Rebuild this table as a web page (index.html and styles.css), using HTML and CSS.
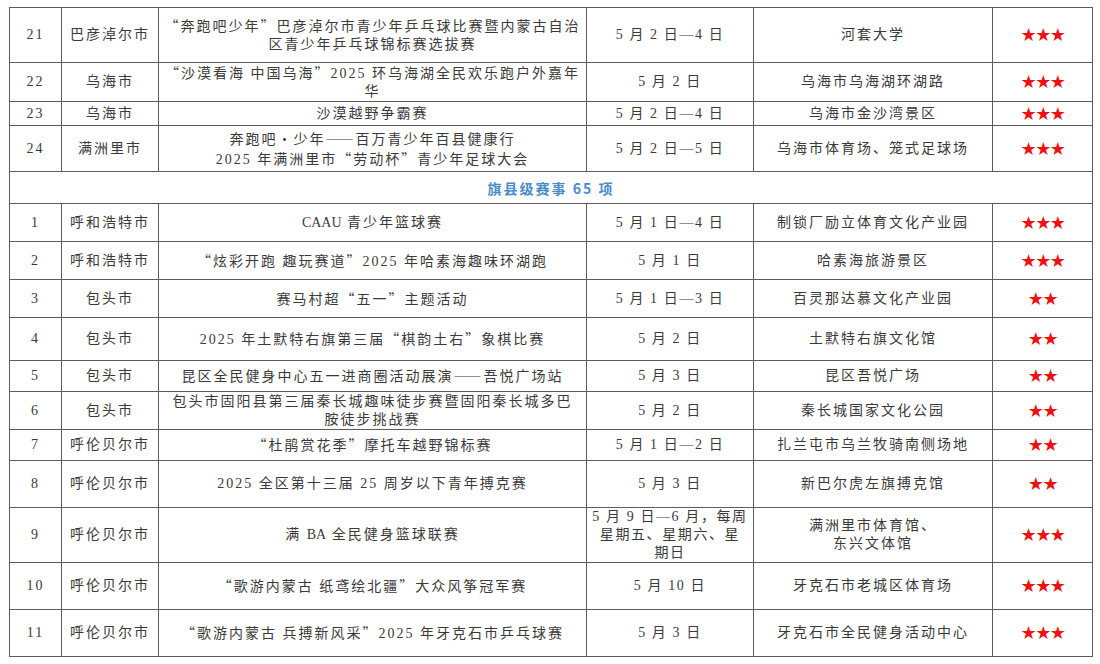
FILE: index.html
```html
<!DOCTYPE html>
<html lang="zh-CN">
<head>
<meta charset="utf-8">
<title>赛事列表</title>
<link rel="stylesheet" href="styles.css">
</head>
<body>
<div class="page">
<table class="events">
  <colgroup>
    <col class="c-no"><col class="c-city"><col class="c-name"><col class="c-date"><col class="c-place"><col class="c-star">
  </colgroup>
  <tbody>
    <tr class="h55"><td>21</td><td>巴彦淖尔市</td><td><span class="q">“</span>奔跑吧少年<span class="q">”</span>巴彦淖尔市青少年乒乓球比赛暨内蒙古自治<br>区青少年乒乓球锦标赛选拔赛</td><td class="date">5 月 2 日—4 日</td><td>河套大学</td><td class="stars">★★★</td></tr>
    <tr class="h39"><td>22</td><td>乌海市</td><td><span class="q">“</span>沙漠看海 中国乌海<span class="q">”</span>2025 环乌海湖全民欢乐跑户外嘉年<br>华</td><td class="date">5 月 2 日</td><td>乌海市乌海湖环湖路</td><td class="stars">★★★</td></tr>
    <tr class="h24"><td>23</td><td>乌海市</td><td>沙漠越野争霸赛</td><td class="date">5 月 2 日—4 日</td><td>乌海市金沙湾景区</td><td class="stars">★★★</td></tr>
    <tr class="h46"><td>24</td><td>满洲里市</td><td>奔跑吧<span class="q">•</span>少年<span class="q">——</span>百万青少年百县健康行<br>2025 年满洲里市<span class="q">“</span>劳动杯<span class="q">”</span>青少年足球大会</td><td class="date">5 月 2 日—5 日</td><td>乌海市体育场、笼式足球场</td><td class="stars">★★★</td></tr>
    <tr class="h32"><td colspan="6" class="section">旗县级赛事 65 项</td></tr>
    <tr class="h38"><td>1</td><td>呼和浩特市</td><td><span class="latin">CAAU</span> 青少年篮球赛</td><td class="date">5 月 1 日—4 日</td><td>制锁厂励立体育文化产业园</td><td class="stars">★★★</td></tr>
    <tr class="h38"><td>2</td><td>呼和浩特市</td><td><span class="q">“</span>炫彩开跑 趣玩赛道<span class="q">”</span>2025 年哈素海趣味环湖跑</td><td class="date">5 月 1 日</td><td>哈素海旅游景区</td><td class="stars">★★★</td></tr>
    <tr class="h38"><td>3</td><td>包头市</td><td>赛马村超<span class="q">“</span>五一<span class="q">”</span>主题活动</td><td class="date">5 月 1 日—3 日</td><td>百灵那达慕文化产业园</td><td class="stars">★★</td></tr>
    <tr class="h43"><td>4</td><td>包头市</td><td>2025 年土默特右旗第三届<span class="q">“</span>棋韵土右<span class="q">”</span>象棋比赛</td><td class="date">5 月 2 日</td><td>土默特右旗文化馆</td><td class="stars">★★</td></tr>
    <tr class="h31"><td>5</td><td>包头市</td><td>昆区全民健身中心五一进商圈活动展演<span class="q">——</span>吾悦广场站</td><td class="date">5 月 3 日</td><td>昆区吾悦广场</td><td class="stars">★★</td></tr>
    <tr class="h38"><td>6</td><td>包头市</td><td>包头市固阳县第三届秦长城趣味徒步赛暨固阳秦长城多巴<br>胺徒步挑战赛</td><td class="date">5 月 2 日</td><td>秦长城国家文化公园</td><td class="stars">★★</td></tr>
    <tr class="h31"><td>7</td><td>呼伦贝尔市</td><td><span class="q">“</span>杜鹃赏花季<span class="q">”</span>摩托车越野锦标赛</td><td class="date">5 月 1 日—2 日</td><td>扎兰屯市乌兰牧骑南侧场地</td><td class="stars">★★</td></tr>
    <tr class="h47"><td>8</td><td>呼伦贝尔市</td><td>2025 全区第十三届 25 周岁以下青年搏克赛</td><td class="date">5 月 3 日</td><td>新巴尔虎左旗搏克馆</td><td class="stars">★★</td></tr>
    <tr class="h55"><td>9</td><td>呼伦贝尔市</td><td>满 <span class="latin">BA</span> 全民健身篮球联赛</td><td class="date">5 月 9 日—6 月，每周<br>星期五、星期六、星<br>期日</td><td>满洲里市体育馆、<br>东兴文体馆</td><td class="stars">★★★</td></tr>
    <tr class="h47"><td>10</td><td>呼伦贝尔市</td><td><span class="q">“</span>歌游内蒙古 纸鸢绘北疆<span class="q">”</span>大众风筝冠军赛</td><td class="date">5 月 10 日</td><td>牙克石市老城区体育场</td><td class="stars">★★★</td></tr>
    <tr class="h47"><td>11</td><td>呼伦贝尔市</td><td><span class="q">“</span>歌游内蒙古 兵搏新风采<span class="q">”</span>2025 年牙克石市乒乓球赛</td><td class="date">5 月 3 日</td><td>牙克石市全民健身活动中心</td><td class="stars">★★★</td></tr>
  </tbody>
</table>
</div>
</body>
</html>
```
FILE: styles.css
```css
html, body {
  margin: 0;
  padding: 0;
  background: #ffffff;
}
.page {
  padding: 7px 0 0 9px;
}
.events {
  border-collapse: collapse;
  table-layout: fixed;
  width: 1084px;
  font-family: "Liberation Serif", "Noto Sans CJK SC", serif;
  font-size: 14px;
  line-height: 18px;
  color: #3a3a3a;
  letter-spacing: 2px;
}
.c-no { width: 52px; }
.c-city { width: 97px; }
.c-name { width: 428px; }
.c-date { width: 167px; }
.c-place { width: 239px; }
.c-star { width: 100px; }
.events td {
  border: 1px solid #5c5c5c;
  padding: 0 2px;
  text-align: center;
  vertical-align: middle;
  white-space: nowrap;
}
.events td.date {
  letter-spacing: 1.6px;
}
.q {
  font-family: "Noto Sans CJK SC", sans-serif;
}
.latin {
  letter-spacing: 0;
}
.events td.stars {
  color: #ee1111;
  font-family: "DejaVu Sans", sans-serif;
  font-size: 18px;
  letter-spacing: -1.5px;
}
.section {
  color: #4a8ccb;
  font-weight: bold;
  font-family: "Noto Sans CJK SC", sans-serif;
  font-size: 14px;
}
.h24 { height: 24px; }
.h31 { height: 31px; }
.h32 { height: 32px; }
.h38 { height: 38px; }
.h39 { height: 39px; }
.h43 { height: 43px; }
.h46 { height: 46px; }
.h47 { height: 47px; }
.h55 { height: 55px; }
```
